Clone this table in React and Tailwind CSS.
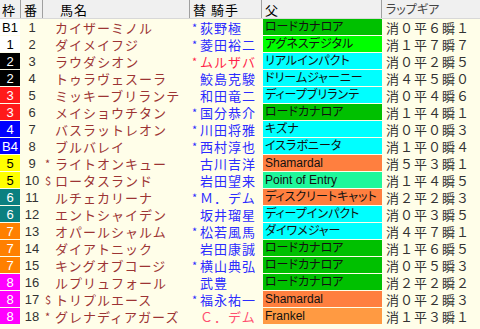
const FRAME = {
  1: 'bg-white text-black',
  2: 'bg-black text-white',
  3: 'bg-[#ff1a1a] text-white',
  4: 'bg-[#0000ff] text-white',
  5: 'bg-[#ffff00] text-black',
  6: 'bg-[#0a8080] text-white',
  7: 'bg-[#ff8000] text-white',
  8: 'bg-[#ff00ff] text-white',
}

const SIRE = {
  green: 'bg-[#00c000]',
  lime: 'bg-[#00ff00]',
  cyan: 'bg-[#00ffff]',
  orange: 'bg-[#ff7f3f]',
  spring: 'bg-[#1ff79b]',
  light: 'bg-[#ff9a42]',
}

const rows = [
  ['B1', 1, 1, '', 'カイザーミノル', '*', '荻野極', 'blue', 'ロードカナロア', 'green', '消０平６瞬１'],
  ['1', 1, 2, '', 'ダイメイフジ', '*', '菱田裕二', 'blue', 'アグネスデジタル', 'lime', '消１平７瞬７'],
  ['2', 2, 3, '', 'ラウダシオン', '*', 'ムルザバ', 'red', 'リアルインパクト', 'cyan', '消０平２瞬５'],
  ['2', 2, 4, '', 'トゥラヴェスーラ', '', '鮫島克駿', 'blue', 'ドリームジャーニー', 'cyan', '消４平５瞬０'],
  ['3', 3, 5, '', 'ミッキーブリランテ', '', '和田竜二', 'blue', 'ディープブリランテ', 'cyan', '消０平４瞬６'],
  ['3', 3, 6, '', 'メイショウチタン', '*', '国分恭介', 'blue', 'ロードカナロア', 'green', '消１平４瞬１'],
  ['4', 4, 7, '', 'バスラットレオン', '*', '川田将雅', 'blue', 'キズナ', 'cyan', '消０平０瞬３'],
  ['B4', 4, 8, '', 'ブルバレイ', '*', '西村淳也', 'blue', 'イスラボニータ', 'cyan', '消１平０瞬４'],
  ['5', 5, 9, '*', 'ライトオンキュー', '', '古川吉洋', 'blue', 'Shamardal', 'orange', '消５平３瞬１'],
  ['5', 5, 10, '$', 'ロータスランド', '', '岩田望来', 'blue', 'Point of Entry', 'spring', '消１平４瞬５'],
  ['6', 6, 11, '', 'ルチェカリーナ', '*', 'Ｍ．デム', 'blue', 'ディスクリートキャット', 'orange', '消２平２瞬３'],
  ['6', 6, 12, '', 'エントシャイデン', '', '坂井瑠星', 'blue', 'ディープインパクト', 'cyan', '消０平３瞬５'],
  ['7', 7, 13, '', 'オパールシャルム', '*', '松若風馬', 'blue', 'ダイワメジャー', 'cyan', '消４平７瞬１'],
  ['7', 7, 14, '', 'ダイアトニック', '', '岩田康誠', 'blue', 'ロードカナロア', 'green', '消１平６瞬５'],
  ['7', 7, 15, '', 'キングオブコージ', '*', '横山典弘', 'blue', 'ロードカナロア', 'green', '消０平５瞬３'],
  ['8', 8, 16, '', 'ルプリュフォール', '', '武豊', 'blue', 'ロードカナロア', 'green', '消２平２瞬２'],
  ['8', 8, 17, '$', 'トリプルエース', '*', '福永祐一', 'blue', 'Shamardal', 'orange', '消０平２瞬３'],
  ['8', 8, 18, '*', 'グレナディアガーズ', '', 'Ｃ．デム', 'pink', 'Frankel', 'light', '消１平３瞬１'],
]

const JOCKEY = {
  blue: 'text-[#2b2bff]',
  red: 'text-[#ff1f4a]',
  pink: 'text-[#ff4f6f]',
}

const jp = "font-['Noto_Sans_CJK_JP',sans-serif]"

export default function App() {
  return (
    <div className={'h-[329px] w-[480px] overflow-hidden bg-[#fffee9] ' + jp}>
      {/* 見出し */}
      <div className="flex h-[19px] border-b border-[#d8d8d8] bg-[#f0f0f0] text-[13px] leading-none text-black">
        <div className="flex w-[21px] items-center border-r border-[#a0a0a0] pl-[2px]">枠</div>
        <div className="flex w-[22px] items-center border-r border-[#a0a0a0] pl-[3px]">番</div>
        <div className="flex w-[147px] items-center border-r border-[#a0a0a0] pl-[17px] tracking-[1px]">馬名</div>
        <div className="flex w-[72px] items-center border-r border-[#a0a0a0] pl-[3px] tracking-[1px]">替 騎手</div>
        <div className="flex w-[120px] items-center border-r border-[#a0a0a0] pl-[3px]">父</div>
        <div className="flex flex-1 items-center pl-[4px] text-[12px] text-[#444] [font-feature-settings:'palt']">ラップギア</div>
      </div>

      {rows.map(([waku, f, num, mark, name, star, jockey, jc, sire, sc, gear]) => (
        <div key={num} className="flex h-[17px] text-[13px] leading-none">
          <div
            className={
              "flex h-[16px] w-[20px] items-center justify-center font-['Liberation_Sans',sans-serif] text-[13px] " +
              FRAME[f]
            }
          >
            {waku}
          </div>
          <div className="ml-[1px] flex h-[16px] w-[22px] items-center justify-center font-['Liberation_Sans',sans-serif] text-[13px] text-[#333]">
            {num}
          </div>
          <div className="flex h-[16px] w-[147px] items-center overflow-hidden whitespace-nowrap text-[#9c3434]">
            <span className="w-[12px] shrink-0 pl-[2px] text-[11px]">{mark}</span>
            <span className="tracking-[1px]">{name}</span>
          </div>
          <div className={'flex h-[16px] w-[72px] items-center overflow-hidden whitespace-nowrap ' + JOCKEY[jc]}>
            <span className="w-[10px] shrink-0 pl-[2px] text-[11px]">{star}</span>
            <span className="tracking-[1px]">{jockey}</span>
          </div>
          <div
            className={
              "ml-[1px] flex h-[16px] w-[119px] items-center overflow-hidden whitespace-nowrap pl-[2px] font-['Liberation_Sans','Noto_Sans_CJK_JP',sans-serif] text-[12px] text-[#111] [font-feature-settings:'palt'] " +
              SIRE[sc]
            }
          >
            {sire}
          </div>
          <div className="ml-[4px] flex h-[16px] flex-1 items-center tracking-[1px] text-[#333]">{gear}</div>
        </div>
      ))}
    </div>
  )
}
